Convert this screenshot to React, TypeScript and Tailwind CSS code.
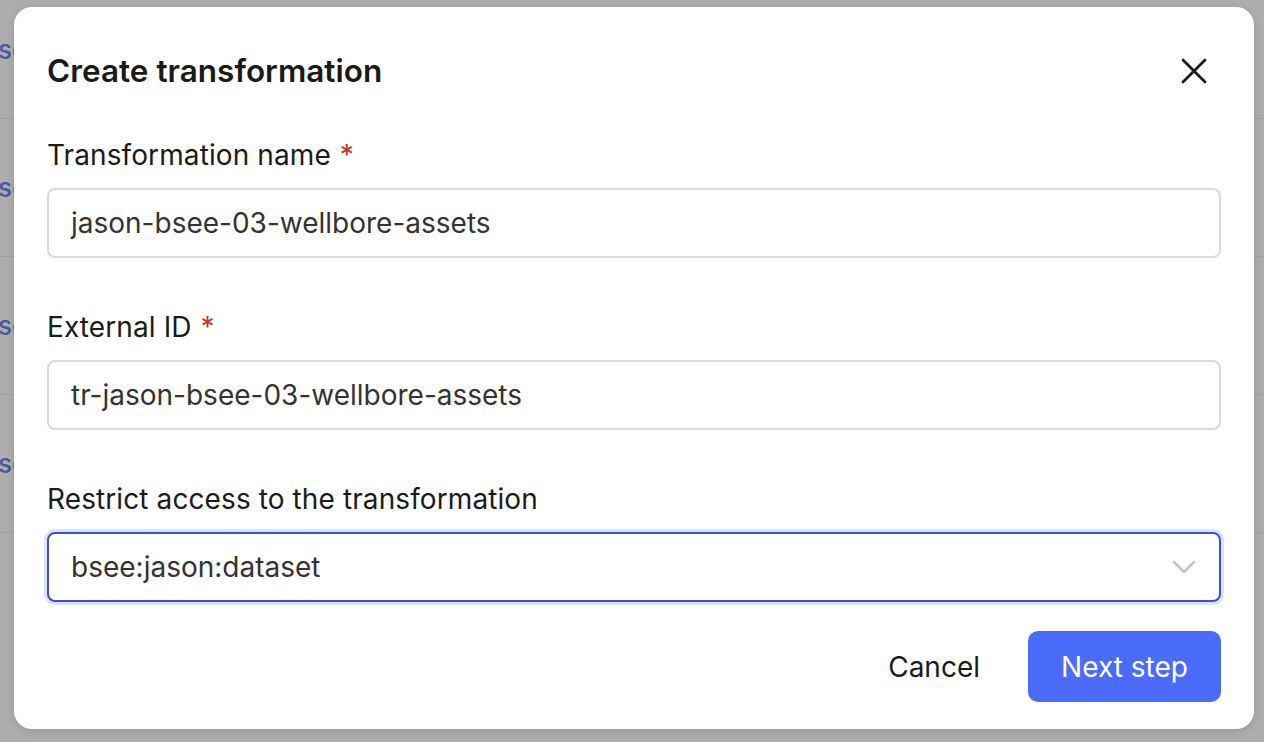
import { ChevronDown } from "lucide-react";

const font = { fontFamily: "Inter, 'Noto Sans', sans-serif" };

const BackgroundRows = () => {
  return (
    <div className="flex flex-col">
      {[119, 138, 138, 138].map((h, i) => (
        <div
          key={i}
          className="flex items-end border-b border-[#a1a1a3] pb-[52px]"
          style={{ height: h }}
        >
          <span className="-ml-[2px] text-[26px] font-medium leading-[32px] text-[#4a599f]">se</span>
        </div>
      ))}
    </div>
  );
};

interface FieldProps {
  label: string;
  required?: boolean;
  children: React.ReactNode;
}

const Field = ({ label, required, children }: FieldProps) => {
  return (
    <div className="flex flex-col gap-[16px]">
      <label className="text-[28px] leading-[34px] tracking-[0.1px] text-[#1b1b1b]">
        {label}
        {required && <span className="ml-[9px] text-[#bd3a1c]">*</span>}
      </label>
      {children}
    </div>
  );
};

export default function App() {
  return (
    <div className="relative h-[742px] w-full overflow-hidden bg-[#adadaf]" style={font}>
      <BackgroundRows />

      <div className="absolute left-[14px] top-[7px] flex w-[1240px] flex-col rounded-[18px] bg-white px-[33px] pb-[27px] pt-[44px] shadow-[0_2px_8px_rgba(0,0,0,0.12)]">
        <div className="flex h-[40px] items-center justify-between">
          <h2 className="text-[31.5px] font-semibold leading-[40px] text-[#1a1a1a]">
            Create transformation
          </h2>
          <button type="button" className="mr-[9px] flex h-[36px] w-[36px] items-center justify-center text-[#1a1a1a]">
            <svg width="26" height="26" viewBox="0 0 26 26" fill="none" stroke="currentColor" strokeWidth="2.8" strokeLinecap="round">
              <path d="M2 2L24 24M24 2L2 24" />
            </svg>
          </button>
        </div>

        <div className="mt-[47px] flex flex-col gap-[52px]">
          <Field label="Transformation name" required>
            <div className="flex h-[70px] items-center rounded-[8px] border-2 border-[#dadada] px-[22px] text-[28px] text-[#333333]">
              jason-bsee-03-wellbore-assets
            </div>
          </Field>

          <Field label="External ID" required>
            <div className="flex h-[70px] items-center rounded-[8px] border-2 border-[#dadada] px-[22px] text-[28px] text-[#333333]">
              tr-jason-bsee-03-wellbore-assets
            </div>
          </Field>

          <Field label="Restrict access to the transformation">
            <div className="flex h-[70px] items-center justify-between rounded-[8px] border-2 border-[#3a4fd6] pl-[22px] pr-[15px] text-[28px] text-[#333333] shadow-[0_0_0_3px_#dde2fb]">
              <span>bsee:jason:dataset</span>
              <ChevronDown size={40} strokeWidth={1.5} className="text-[#c6c6c6]" />
            </div>
          </Field>
        </div>

        <div className="mt-[29px] flex items-center justify-end gap-[24px]">
          <button type="button" className="h-[71px] px-[24px] text-[28px] text-[#1a1a1a]">
            Cancel
          </button>
          <button
            type="button"
            className="h-[71px] w-[193px] rounded-[10px] bg-[#4b6bfb] text-[28px] text-white"
          >
            Next step
          </button>
        </div>
      </div>
    </div>
  );
}
